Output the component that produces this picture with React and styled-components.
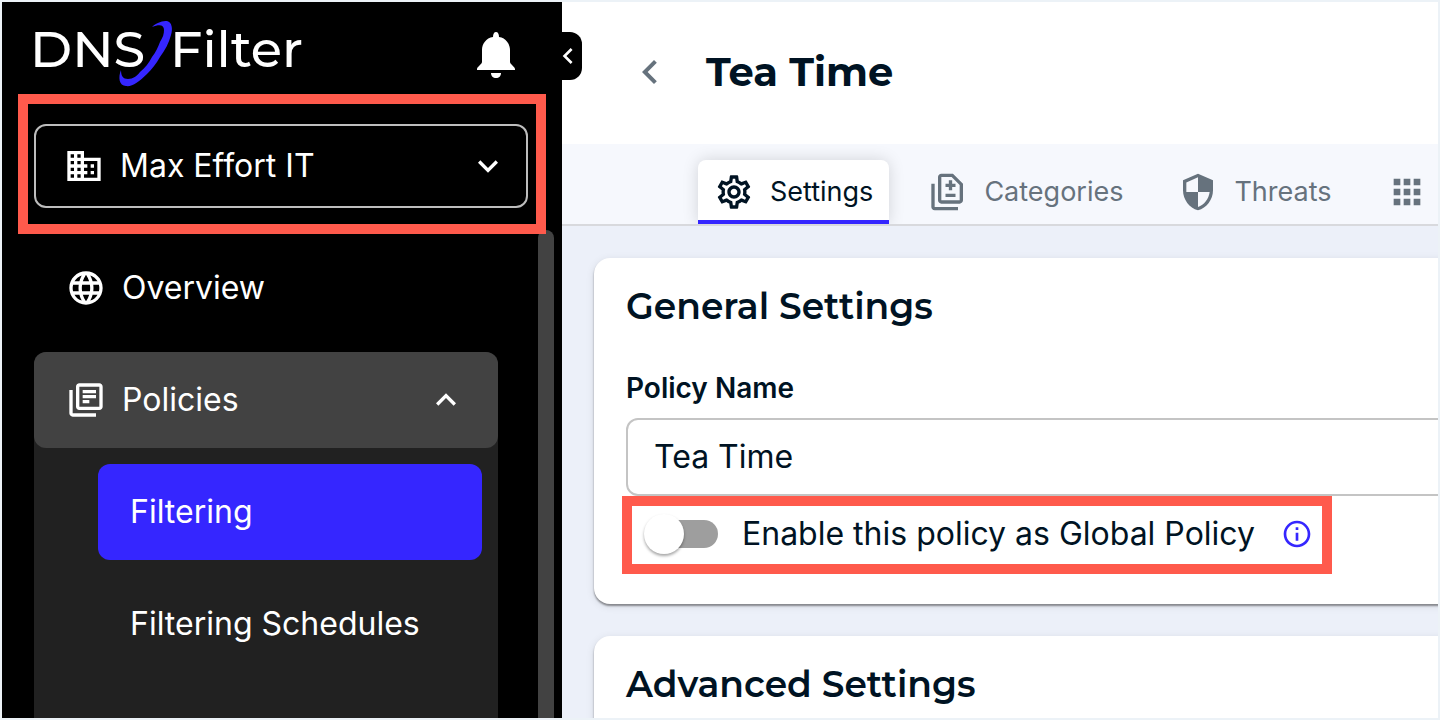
import React, { useState } from 'react'
import styled, { createGlobalStyle } from 'styled-components'
import {
    MdApps,
    MdBusiness,
    MdChevronLeft,
    MdExpandLess,
    MdExpandMore,
    MdInfoOutline,
    MdLanguage,
    MdOutlineDifference,
    MdOutlineLibraryBooks,
    MdOutlineSettings,
    MdSecurity
} from 'react-icons/md'

const tabs = [
    { id: 'settings', title: 'Settings', icon: MdOutlineSettings },
    { id: 'categories', title: 'Categories', icon: MdOutlineDifference },
    { id: 'threats', title: 'Threats', icon: MdSecurity },
    { id: 'apps', title: '', icon: MdApps }
]

const Logo = () => (
    <LogoSvg viewBox="0 0 284 68" role="img" aria-label="DNSFilter">
        <LogoText x="-4" y="46">DNS</LogoText>
        <LogoText x="136" y="46">Filter</LogoText>
        <path
            d="M118 6C123 1 129 0 133 0C138 1 139 8 137 14C135 22 131 29 126 36C122 43 118 48 113 53C105 61 98 66 92 65C85 65 84 56 87 49C87 55 89 58 94 58C99 58 103 55 106 51C111 47 115 42 118 36C122 31 124 26 126 21C129 16 130 13 130 9C130 4 126 3 118 6Z"
            fill="#3526ff"
            stroke="#000"
            strokeWidth="2"
            paintOrder="stroke"
        />
    </LogoSvg>
)

const Bell = () => (
    <svg width="38" height="46" viewBox="0 0 38 46" fill="#fff" aria-hidden="true">
        <path d="M19 0C21 0 22 2 22 5C29 6 33 12 33 18V30C33 32 38 35 38 37V38H0V37C0 35 5 32 5 30V18C5 12 9 6 16 5C16 2 17 0 19 0Z" />
        <path d="M14 41H24C24 44 22 46 19 46C16 46 14 44 14 41Z" />
    </svg>
)

const App = () => {
    const [activeTab, setActiveTab] = useState('settings')
    const [open, setOpen] = useState(true)
    const [policyName, setPolicyName] = useState('Tea Time')
    const [isGlobal, setIsGlobal] = useState(false)

    return (
        <Page>
            <GlobalStyle />
            <Sidebar>
                <SidebarTop>
                    <Logo />
                    <IconButton aria-label="Notifications"><Bell /></IconButton>
                </SidebarTop>
                <CollapseButton aria-label="Collapse sidebar"><MdChevronLeft size={32} /></CollapseButton>
                <OrgHighlight>
                    <OrgField>
                        <MdBusiness size={40} />
                        <OrgSelect aria-label="Organization">
                            <option>Max Effort IT</option>
                        </OrgSelect>
                        <MdExpandMore size={40} />
                    </OrgField>
                </OrgHighlight>
                <Nav>
                    <NavLink href="#overview">
                        <MdLanguage size={40} />
                        <span>Overview</span>
                    </NavLink>
                    <NavGroup>
                        <NavToggle aria-expanded={open} onClick={() => setOpen(!open)}>
                            <MdOutlineLibraryBooks size={40} />
                            <span>Policies</span>
                            {open ? <MdExpandLess size={40} /> : <MdExpandMore size={40} />}
                        </NavToggle>
                        {open && (
                            <SubMenu>
                                <SubLink href="#filtering" $active>Filtering</SubLink>
                                <SubLink href="#schedules">Filtering Schedules</SubLink>
                            </SubMenu>
                        )}
                    </NavGroup>
                </Nav>
                <ScrollThumb />
            </Sidebar>
            <Main>
                <Header>
                    <IconButton aria-label="Back"><MdChevronLeft size={48} /></IconButton>
                    <Title>Tea Time</Title>
                </Header>
                <TabBar>
                    {tabs.map(({ id, title, icon: Icon }) => (
                        <Tab
                            key={id}
                            $active={id === activeTab}
                            aria-label={title || 'Apps'}
                            onClick={() => setActiveTab(id)}
                        >
                            <Icon size={40} />
                            {title && <span>{title}</span>}
                        </Tab>
                    ))}
                </TabBar>
                <Content>
                    <Card>
                        <CardTitle>General Settings</CardTitle>
                        <Label htmlFor="policy-name">Policy Name</Label>
                        <TextInput
                            id="policy-name"
                            value={policyName}
                            onChange={(e) => setPolicyName(e.target.value)}
                        />
                        <ToggleHighlight>
                            <Switch
                                id="global-policy"
                                type="checkbox"
                                checked={isGlobal}
                                onChange={() => setIsGlobal(!isGlobal)}
                            />
                            <ToggleLabel htmlFor="global-policy">Enable this policy as Global Policy</ToggleLabel>
                            <InfoButton aria-label="More info"><MdInfoOutline size={32} /></InfoButton>
                        </ToggleHighlight>
                    </Card>
                    <Card>
                        <CardTitle>Advanced Settings</CardTitle>
                    </Card>
                </Content>
            </Main>
        </Page>
    )
}

export default App

const GlobalStyle = createGlobalStyle`
* {
    box-sizing: border-box;
}
body {
    margin: 0;
    font-family: Inter, 'Liberation Sans', sans-serif;
    line-height: 1.15;
    color: #001323;
}
button, input, select {
    font: inherit;
    color: inherit;
}
button {
    border: 0;
    padding: 0;
    background: none;
    cursor: pointer;
}
a {
    color: inherit;
    text-decoration: none;
}
svg {
    flex: none;
    display: block;
}
`
const Page = styled.div`
display: flex;
height: 100vh;
overflow: hidden;
border: 2px solid #ecf2f7;
`
const Sidebar = styled.aside`
position: relative;
z-index: 1;
flex: none;
width: 560px;
background: #000;
color: #fff;
font-size: 32px;
`
const SidebarTop = styled.div`
display: flex;
align-items: center;
justify-content: space-between;
height: 92px;
padding: 14px 47px 0 32px;
`
const LogoSvg = styled.svg`
width: 284px;
height: 68px;
overflow: visible;
`
const LogoText = styled.text`
font-family: Montserrat, 'DejaVu Sans', sans-serif;
font-size: 51px;
font-weight: 500;
fill: #fff;
`
const IconButton = styled.button`
color: #66727d;
`
const CollapseButton = styled.button`
position: absolute;
top: 30px;
right: -20px;
display: flex;
align-items: center;
width: 30px;
height: 48px;
border-radius: 0 12px 12px 0;
background: #000;
color: #fff;
`
const OrgHighlight = styled.div`
position: relative;
z-index: 1;
margin: 0 16px;
padding: 20px 8px 16px 6px;
border: 10px solid #ff5a4c;
`
const OrgField = styled.div`
display: flex;
align-items: center;
height: 84px;
padding: 0 18px 0 28px;
border: 2px solid #bdbdbd;
border-radius: 12px;
`
const OrgSelect = styled.select`
flex: 1;
min-width: 0;
height: 100%;
padding: 0 16px;
border: 0;
background: transparent;
appearance: none;
`
const Nav = styled.nav`
display: flex;
flex-direction: column;
gap: 16px;
padding: 6px 64px 0 32px;
`
const NavLink = styled.a`
display: flex;
align-items: center;
gap: 16px;
height: 96px;
padding: 0 32px;
`
const NavGroup = styled.div`
min-height: 400px;
border-radius: 12px;
background: #212121;
`
const NavToggle = styled.button`
display: flex;
align-items: center;
gap: 16px;
width: 100%;
height: 96px;
padding: 0 32px;
border-radius: 12px;
background: #424242;
text-align: left;
span {
    flex: 1;
}
`
const SubMenu = styled.div`
display: flex;
flex-direction: column;
gap: 16px;
padding: 16px 16px 16px 64px;
`
const SubLink = styled.a`
display: flex;
align-items: center;
height: 96px;
padding: 0 32px;
border-radius: 12px;
background: ${props => props.$active ? '#3526ff' : 'transparent'};
`
const ScrollThumb = styled.div`
position: absolute;
top: 228px;
right: 8px;
bottom: 0;
width: 16px;
border-radius: 8px 8px 0 0;
background: #424242;
`
const Main = styled.main`
flex: 1;
min-width: 0;
overflow: hidden;
background: #ecf0f9;
`
const Header = styled.header`
display: flex;
align-items: center;
gap: 32px;
height: 142px;
padding: 0 0 2px 64px;
background: #fff;
`
const Title = styled.h1`
margin: 0;
font-family: Montserrat, Inter, sans-serif;
font-size: 40px;
font-weight: 700;
`
const TabBar = styled.div`
display: flex;
align-items: flex-end;
gap: 23px;
height: 82px;
padding-left: 136px;
border-bottom: 2px solid #d8d9dd;
background: #f6f8fd;
overflow: hidden;
`
const Tab = styled.button`
display: flex;
flex: none;
align-items: center;
gap: 16px;
height: 64px;
padding: 4px 16px 0;
border-bottom: 4px solid ${props => props.$active ? '#3526ff' : 'transparent'};
border-radius: 8px 8px 0 0;
background: ${props => props.$active ? '#fff' : 'transparent'};
box-shadow: ${props => props.$active ? '0 0 16px rgba(0, 0, 0, 0.15)' : 'none'};
color: ${props => props.$active ? '#001323' : '#66727d'};
font-size: 27px;
`
const Content = styled.div`
display: flex;
flex-direction: column;
gap: 32px;
margin-right: -32px;
padding: 32px 0 0 32px;
`
const Card = styled.section`
display: flex;
flex-direction: column;
align-items: flex-start;
padding: 24px 0 30px 32px;
border-radius: 16px;
background: #fff;
box-shadow: 0 2px 2px rgba(0, 0, 0, 0.4), 0 2px 8px rgba(0, 0, 0, 0.1);
`
const CardTitle = styled.h2`
margin: 0;
font-family: Montserrat, Inter, sans-serif;
font-size: 36px;
font-weight: 600;
line-height: 48px;
`
const Label = styled.label`
margin-top: 40px;
font-size: 28px;
font-weight: 600;
line-height: 36px;
`
const TextInput = styled.input`
width: 100%;
height: 78px;
margin-top: 12px;
padding: 0 26px 2px;
border: 2px solid #c4c4c4;
border-radius: 12px;
background: #fff;
font-size: 32px;
`
const ToggleHighlight = styled.div`
display: flex;
align-items: center;
height: 78px;
margin-left: -4px;
padding: 0 9px 2px 12px;
border: 10px solid #ff5a4c;
`
const Switch = styled.input`
position: relative;
flex: none;
width: 68px;
height: 28px;
margin: 0 24px 0 6px;
border-radius: 14px;
background: #9e9e9e;
appearance: none;
cursor: pointer;
&::before {
    content: '';
    position: absolute;
    top: -6px;
    left: -6px;
    width: 40px;
    height: 40px;
    border-radius: 50%;
    background: #fff;
    box-shadow: 0 2px 3px rgba(0, 0, 0, 0.35);
}
&:checked {
    background: #3526ff;
}
&:checked::before {
    left: 34px;
}
`
const ToggleLabel = styled.label`
font-size: 32px;
`
const InfoButton = styled.button`
margin-left: 26px;
color: #3526ff;
`
